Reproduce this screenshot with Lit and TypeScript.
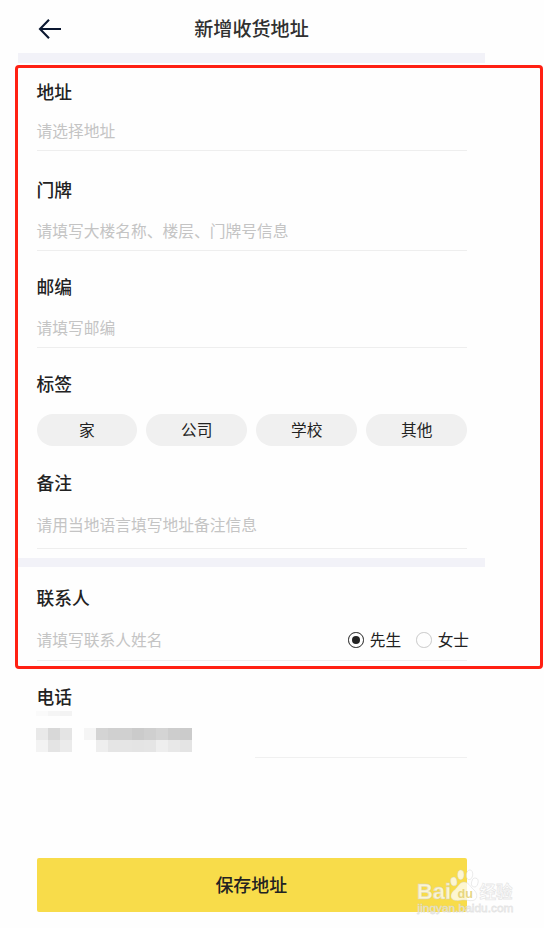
import { LitElement, html, css, svg } from "lit";
import { customElement, property, state } from "lit/decorators.js";
import { classMap } from "lit/directives/class-map.js";

@customElement("form-field")
class FormField extends LitElement {
  @property() label = "";
  @property() hint = "";

  static styles = css`
    :host { display: flex; flex-direction: column; box-sizing: border-box; margin: 0 18px 0 18.5px; border-bottom: 1px solid #eeeeee; }
    :host([plain]) { border-bottom-color: transparent; }
    .label { font-size: 17.75px; line-height: 24px; font-weight: 500; color: #222; }
    .row { display: flex; align-items: center; justify-content: space-between; height: 24px; margin-top: var(--gap, 18px); }
    .hint { font-size: 15.75px; line-height: 24px; color: #c4c4c4; white-space: nowrap; }
  `;

  render() {
    return html`
      <div class="label">${this.label}</div>
      <div class="row">
        ${this.hint ? html`<span class="hint">${this.hint}</span>` : null}
        <slot></slot>
      </div>
    `;
  }
}

@customElement("site-watermark")
class SiteWatermark extends LitElement {
  static styles = css`
    :host { display: block; }
    svg { display: block; }
    .mark { fill: #fff; fill-opacity: 0.75; stroke: #cfcfcf; stroke-opacity: 0.5; stroke-width: 0.8; }
    .latin { font-family: "Liberation Sans", Arial, sans-serif; font-weight: 700; }
    .url { font-family: "Liberation Sans", Arial, sans-serif; font-weight: 400; fill-opacity: 0.7; stroke-opacity: 0.55; }
    .cjk { font-family: "Noto Sans CJK SC", sans-serif; font-weight: 700; }
    .du { fill: #e2cf70; fill-opacity: 0.85; }
  `;

  render() {
    return html`<svg width="104" height="54" viewBox="0 0 104 54">
      ${svg`
        <text class="mark latin" x="1" y="35" font-size="21.5" textLength="34" lengthAdjust="spacingAndGlyphs">Bai</text>
        <g class="mark">
          <ellipse cx="37.700" cy="17.500" rx="3.200" ry="4.400" transform="rotate(-10 37.700 17.500)" />
          <ellipse cx="44.700" cy="10.800" rx="3.200" ry="4.900" />
          <ellipse cx="53.500" cy="10.800" rx="3.200" ry="4.900" transform="rotate(8 53.500 10.800)" />
          <ellipse cx="58.800" cy="18.500" rx="3.200" ry="4.500" transform="rotate(14 58.800 18.500)" />
          <path d="M48 18C43.500 18 42.500 22.500 39 25.500C33.500 29.500 33.500 35.500 39.500 36.500C43 37 45 36 48 36S54 37 57 36.500C62.500 35 61.500 29 57.500 25.500C54 22.500 52.500 18 48 18Z" />
        </g>
        <text class="du latin" x="41.500" y="34" font-size="13.500" textLength="15.500" lengthAdjust="spacingAndGlyphs">du</text>
        <text class="mark cjk" x="63.500" y="34.300" font-size="17" textLength="33" lengthAdjust="spacingAndGlyphs">经验</text>
        <text class="mark url" x="1.500" y="48" font-size="11.500" textLength="96" lengthAdjust="spacingAndGlyphs">jingyan.baidu.com</text>
      `}
    </svg>`;
  }
}

@customElement("app-root")
class AppRoot extends LitElement {
  @state() title_ = "先生";

  tags = ["家", "公司", "学校", "其他"];
  titles = ["先生", "女士"];
  mosaic = [
    ["#e9e9e9", "#d8d8d8", "#e4e4e4", "", "#f5f5f5", "#d4d4d4", "#d0d0d0", "#d0d0d0", "#cbcbcb", "#cfcfcf", "#d4d4d4", "#cdcdcd", "#cbcbcb"],
    ["#f3f3f3", "#e4e4e4", "#ebebeb", "", "", "#eeeeee", "#e5e5e5", "#e5e5e5", "#e4e4e4", "#e5e5e5", "#eeeeee", "#e8e8e8", "#e4e4e4"],
  ];

  static styles = css`
    :host {
      display: block; position: relative; width: 544px; height: 928px; overflow: hidden;
      background: #fefefe; color: #222;
      font-family: "Noto Sans CJK SC", sans-serif;
    }
    .screen { width: 467px; margin-left: 18px; display: flex; flex-direction: column; }
    header { height: 53px; display: grid; grid-template-columns: 60px 1fr 60px; align-items: center; }
    .back { display: block; margin: 4px 0 0 19px; }
    h1 { margin: 4px 0 0; font-size: 19.1px; line-height: 27px; font-weight: 500; text-align: center; color: #303030; }
    .band { height: 10px; background: #f2f2f8; }
    .band.thin { height: 9px; margin-top: 9px; }
    .address { height: 88px; padding-top: 16px; --gap: 16px; }
    .door { height: 100px; padding-top: 26px; }
    .zip { height: 97px; padding-top: 23px; }
    .label-field { height: 99px; padding-top: 23px; --gap: 23px; }
    .note { height: 102px; padding-top: 23px; --gap: 19px; }
    .contact { height: 94px; padding-top: 18px; --gap: 19px; }
    .phone { height: 97px; padding-top: 23px; --gap: 20px; }
    .tags { flex: 1; display: grid; grid-template-columns: repeat(4, 1fr); gap: 9.3px; }
    .tag { height: 31.5px; border-radius: 16px; background: #f0f0f0; font-size: 15.7px; line-height: 31px; text-align: center; }
    .choices { display: flex; gap: 15px; margin-right: -2px; }
    .choice { display: flex; align-items: center; gap: 6px; font-size: 15.7px; line-height: 24px; }
    .dot { box-sizing: border-box; width: 15.5px; height: 15.5px; border: 1.5px solid #cacaca; border-radius: 50%; display: grid; place-items: center; }
    .dot.on { border-color: #222; }
    .dot.on::after { content: ""; width: 8px; height: 8px; border-radius: 50%; background: #222; }
    .mosaic { position: relative; display: grid; grid-template-columns: repeat(13, 12px); grid-auto-rows: 12px; margin-left: -0.5px; }
    .mosaic::before {
      content: ""; position: absolute; left: 0; top: -17px; width: 36px; height: 5px;
      background: linear-gradient(90deg, #fafafa 12px, #f5f5f5 12px 24px, #f3f3f3 24px);
    }
    .rule { height: 1px; margin: -1px 18px 0 237px; background: #f0f0f0; }
    .save {
      margin: 100px 18px 0 18.5px; height: 54px; border: 0; border-radius: 2px; padding: 0 1px 2px 0;
      background: #f8dc4a; color: #222; font: 500 17.9px/52px "Noto Sans CJK SC", sans-serif;
    }
    .frame { position: absolute; left: 15px; top: 65px; width: 528px; height: 604px; box-sizing: border-box; border: 3px solid #ff2013; border-radius: 4px; pointer-events: none; }
    .watermark { position: absolute; left: 416px; top: 864px; }
  `;

  render() {
    return html`
      <div class="screen">
        <header>
          <svg class="back" width="24" height="22" viewBox="0 0 24 22" fill="none" stroke="#0b1730" stroke-width="2.1">
            <path d="M12 1.800L3 11L12 20.200M3 11H24" />
          </svg>
          <h1>新增收货地址</h1>
        </header>
        <div class="band"></div>
        <form-field class="address" label="地址" hint="请选择地址"></form-field>
        <form-field class="door" label="门牌" hint="请填写大楼名称、楼层、门牌号信息"></form-field>
        <form-field class="zip" label="邮编" hint="请填写邮编"></form-field>
        <form-field class="label-field" label="标签" plain>
          <div class="tags">${this.tags.map((t) => html`<div class="tag">${t}</div>`)}</div>
        </form-field>
        <form-field class="note" label="备注" hint="请用当地语言填写地址备注信息"></form-field>
        <div class="band thin"></div>
        <form-field class="contact" label="联系人" hint="请填写联系人姓名">
          <div class="choices">
            ${this.titles.map(
              (t) => html`<div class="choice" @click=${() => (this.title_ = t)}>
                <span class=${classMap({ dot: true, on: t === this.title_ })}></span>${t}
              </div>`
            )}
          </div>
        </form-field>
        <form-field class="phone" label="电话" plain>
          <div class="mosaic">
            ${this.mosaic.flat().map((c) => html`<i style="background:${c || "transparent"}"></i>`)}
          </div>
        </form-field>
        <div class="rule"></div>
        <button class="save">保存地址</button>
      </div>
      <div class="frame"></div>
      <site-watermark class="watermark"></site-watermark>
    `;
  }
}
